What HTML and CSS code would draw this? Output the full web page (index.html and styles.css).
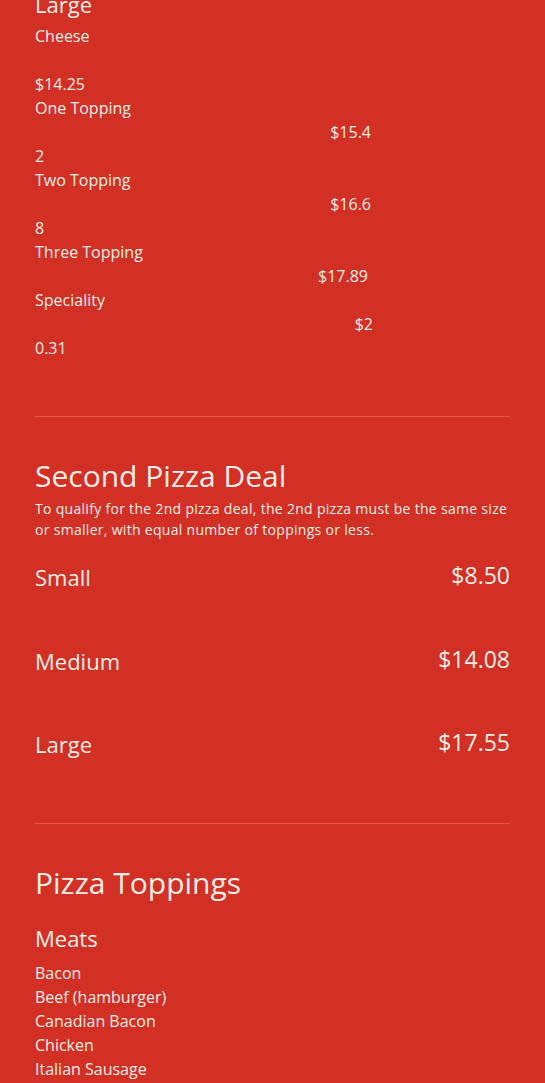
FILE: index.html
```html
<!DOCTYPE HTML>
<html>
<head>
<title>Menu - Pizza</title>
<link rel="stylesheet" href="styles.css">
</head>
<body>

<div class="menu">

<div class="section first">
<h3 class="size_title">Large</h3>
<div class="item">
	<p class="line">Cheese</p>
	<p class="line price_top"></p>
	<p class="line">$14.25</p>
</div>
<div class="item">
	<p class="line">One Topping</p>
	<p class="line price_top">$15.4</p>
	<p class="line">2</p>
</div>
<div class="item">
	<p class="line">Two Topping</p>
	<p class="line price_top">$16.6</p>
	<p class="line">8</p>
</div>
<div class="item">
	<p class="line">Three Topping</p>
	<p class="line price_top narrow">$17.89</p>
</div>
<div class="item">
	<p class="line">Speciality</p>
	<p class="line price_top wide">$2</p>
	<p class="line">0.31</p>
</div>
</div>

<hr class="divider">

<div class="section">
<h2 class="section_title">Second Pizza Deal</h2>
<p class="note">To qualify for the 2nd pizza deal, the 2nd pizza must be the same size or smaller, with equal number of toppings or less.</p>
<div class="deals">
	<div class="deal_row"><span class="deal_name">Small</span><span class="deal_price">$8.50</span></div>
	<div class="deal_row"><span class="deal_name">Medium</span><span class="deal_price">$14.08</span></div>
	<div class="deal_row"><span class="deal_name">Large</span><span class="deal_price">$17.55</span></div>
</div>
</div>

<hr class="divider after_deals">

<div class="section">
<h2 class="section_title">Pizza Toppings</h2>
<h3 class="group_title">Meats</h3>
<ul class="toppings">
	<li>Bacon</li>
	<li>Beef (hamburger)</li>
	<li>Canadian Bacon</li>
	<li>Chicken</li>
	<li>Italian Sausage</li>
</ul>
</div>

</div>
</body>
</html>
```

FILE: styles.css
```css
html {
	background-color:#d22f25;
}
body {
	margin:0;
	font-family:"Open Sans", sans-serif;
	color:#fbeee6;
}
.menu {
	padding:0 35px;
}
.section.first {
	margin-top:-11px;
}
.size_title {
	font-size:22px;
	font-weight:normal;
	line-height:30px;
	margin:0 0 5px 0;
}
.item {
	font-size:16px;
	line-height:24px;
}
.line {
	margin:0;
	min-height:24px;
}
.price_top {
	width:336px;
	text-align:right;
}
.price_top.narrow {
	width:333px;
}
.price_top.wide {
	width:338px;
}
.divider {
	border:none;
	border-top:1px solid #e2564b;
	margin:56px 0 0 0;
}
.divider.after_deals {
	margin-top:64px;
}
.section_title {
	font-size:30px;
	font-weight:normal;
	line-height:40px;
	margin:39px 0 2px 0;
}
.note {
	font-size:14px;
	line-height:21px;
	margin:0 0 22px 0;
	letter-spacing:0.3px;
}
.deals {
	display:flex;
	flex-direction:column;
	gap:53.5px;
}
.deal_row {
	display:flex;
	justify-content:space-between;
	align-items:baseline;
	font-size:22px;
	line-height:30px;
}
.deal_price {
	font-size:23px;
	position:relative;
	top:-2px;
}
.group_title {
	font-size:22px;
	font-weight:normal;
	line-height:30px;
	margin:20px 0 8px 0;
}
.toppings {
	list-style:none;
	margin:0;
	padding:0;
	font-size:16px;
	line-height:24px;
}
```
